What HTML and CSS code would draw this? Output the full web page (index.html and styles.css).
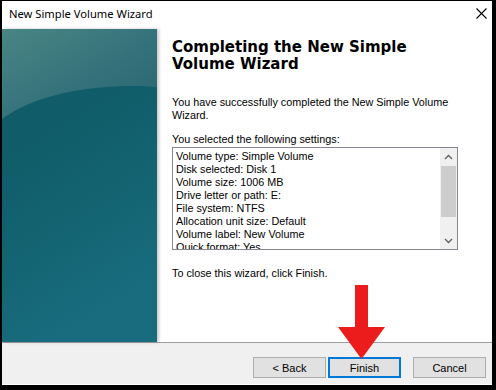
FILE: index.html
```html
<!DOCTYPE html>
<html>
<head>
<meta charset="utf-8">
<link rel="stylesheet" href="styles.css">
</head>
<body>
<div class="window">
  <div class="titlebar">
    <span class="title">New Simple Volume Wizard</span>
    <svg class="close" width="11" height="11" viewBox="0 0 11 11"><path d="M0.5 0.5 L10.5 10.5 M10.5 0.5 L0.5 10.5" stroke="#000" stroke-width="1.1" fill="none"/></svg>
  </div>
  <div class="main">
    <div class="banner">
      <svg width="155" height="313" viewBox="0 0 155 313" preserveAspectRatio="none">
        <defs>
          <linearGradient id="bg" x1="0" y1="0" x2="0.3" y2="1">
            <stop offset="0" stop-color="#0f5864"/>
            <stop offset="0.5" stop-color="#115f6c"/>
            <stop offset="1" stop-color="#186c7d"/>
          </linearGradient>
          <linearGradient id="top" x1="0" y1="0" x2="1" y2="1">
            <stop offset="0" stop-color="#4a8584"/>
            <stop offset="0.6" stop-color="#32707a"/>
            <stop offset="1" stop-color="#2a6570"/>
          </linearGradient>
        </defs>
        <rect width="155" height="313" fill="url(#bg)"/>
        <path d="M0 0 H155 V58 C110 54 40 60 0 90 Z" fill="url(#top)"/>
      </svg>
    </div>
    <div class="content">
      <h1 class="heading">Completing the New Simple Volume Wizard</h1>
      <p class="text done">You have successfully completed the New Simple Volume Wizard.</p>
      <p class="text selected">You selected the following settings:</p>
      <div class="listbox">
        <div class="items">
          <div>Volume type: Simple Volume</div>
          <div>Disk selected: Disk 1</div>
          <div>Volume size: 1006 MB</div>
          <div>Drive letter or path: E:</div>
          <div>File system: NTFS</div>
          <div>Allocation unit size: Default</div>
          <div>Volume label: New Volume</div>
          <div>Quick format: Yes</div>
        </div>
        <div class="scrollbar">
          <svg class="caret" width="17" height="17" viewBox="0 0 17 17"><path d="M5 11 L8.5 7.5 L12 11" stroke="#606060" stroke-width="1.3" fill="none"/></svg>
          <div class="track"><div class="thumb"></div></div>
          <svg class="caret" width="17" height="17" viewBox="0 0 17 17"><path d="M5 7 L8.5 10.5 L12 7" stroke="#606060" stroke-width="1.3" fill="none"/></svg>
        </div>
      </div>
      <p class="text close-hint">To close this wizard, click Finish.</p>
    </div>
  </div>
  <div class="footer">
    <button class="btn">&lt; Back</button>
    <button class="btn primary">Finish</button>
    <button class="btn cancel">Cancel</button>
  </div>
  <svg class="arrow" width="48" height="75" viewBox="0 0 48 75">
    <path d="M17 0 H30 V42 H47 L23.5 74 L0 42 H17 Z" fill="#ec1c1c"/>
  </svg>
</div>
</body>
</html>
```

FILE: styles.css
```css
html, body {
  margin: 0;
  padding: 0;
  background: #000;
}
body {
  width: 496px;
  height: 390px;
  overflow: hidden;
}
.window {
  position: relative;
  margin: 1px 0 0 2px;
  width: 490px;
  height: 384px;
  background: #fff;
  display: flex;
  flex-direction: column;
}
.titlebar {
  height: 28px;
  flex: none;
  display: flex;
  align-items: center;
  justify-content: space-between;
  padding: 0 5px 0 7px;
  font-family: "Noto Sans", sans-serif;
  font-size: 11.2px;
  color: #000;
}
.title {
  margin-top: -4px;
}
.close {
  margin-top: -3px;
}
.main {
  height: 313px;
  flex: none;
  display: flex;
  border-bottom: 1px solid #a0a0a0;
}
.banner {
  width: 155px;
  flex: none;
  box-shadow: 2px 0 3px rgba(0,0,0,0.22);
  position: relative;
}
.banner svg {
  display: block;
}
.content {
  flex: 1;
  padding: 10px 0 0 15px;
  font-family: "Liberation Sans", Arial, sans-serif;
  font-size: 10.8px;
  color: #000;
}
.heading {
  margin: 0;
  width: 270px;
  font-family: "DejaVu Sans", Verdana, sans-serif;
  font-weight: bold;
  font-size: 15px;
  line-height: 17px;
}
.text {
  margin: 0;
  line-height: 13px;
}
.done {
  margin-top: 23px;
  width: 290px;
}
.selected {
  margin-top: 11px;
}
.listbox {
  margin-top: 1px;
  width: 284px;
  height: 101px;
  border: 1px solid #828790;
  display: flex;
  overflow: hidden;
}
.items {
  flex: 1;
  padding: 2px 0 0 3px;
  line-height: 13px;
  white-space: nowrap;
}
.scrollbar {
  width: 17px;
  flex: none;
  background: #f0f0f0;
  display: flex;
  flex-direction: column;
}
.caret {
  display: block;
  flex: none;
}
.track {
  flex: 1;
}
.thumb {
  margin: 1px 1px 0 1px;
  height: 51px;
  background: #cdcdcd;
}
.close-hint {
  margin-top: 17px;
}
.footer {
  flex: 1;
  background: #f0f0f0;
  border-bottom: 1px solid #fff;
  display: flex;
  align-items: flex-start;
  justify-content: flex-end;
  padding: 14px 6px 0 0;
}
.btn {
  width: 73px;
  height: 21px;
  margin: 0;
  padding: 0;
  background: #e1e1e1;
  border: 1px solid #adadad;
  font-family: "Liberation Sans", Arial, sans-serif;
  font-size: 11px;
  color: #000;
}
.primary {
  margin-left: 2px;
  border: 2px solid #0078d7;
}
.cancel {
  margin-left: 12px;
}
.arrow {
  position: absolute;
  left: 336px;
  top: 284px;
}
```
